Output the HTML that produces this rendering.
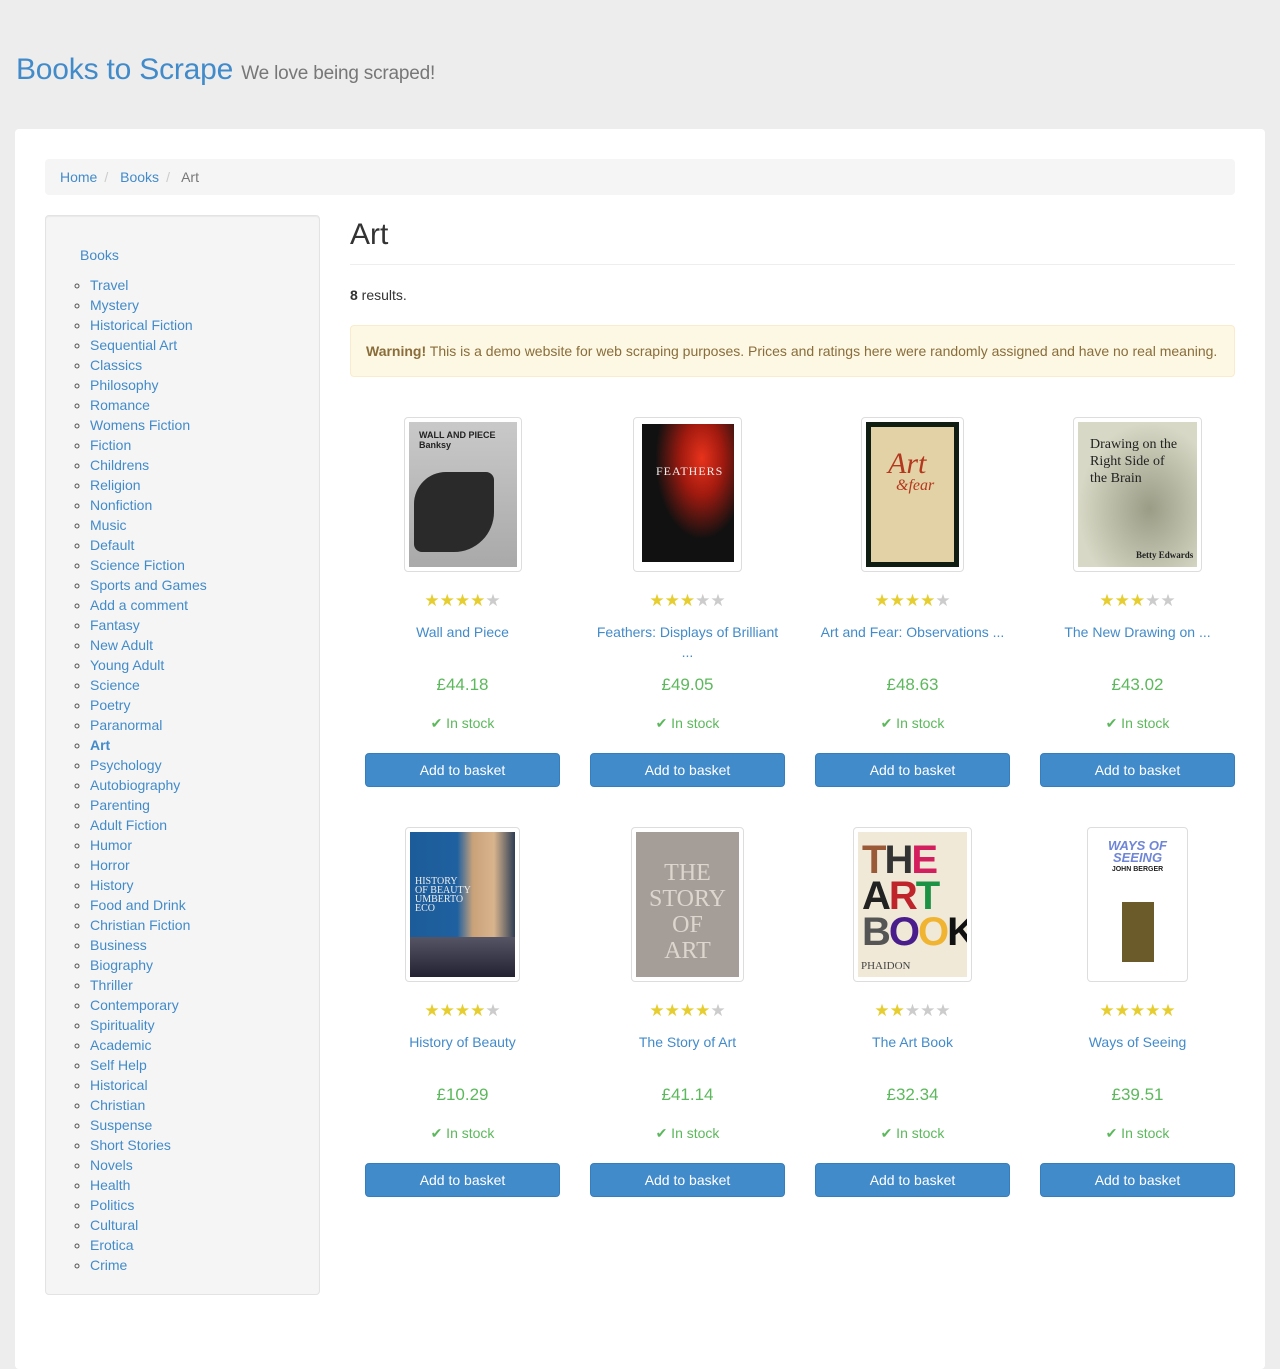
<!DOCTYPE html>
<html><head><meta charset="utf-8">
<style>
*{box-sizing:border-box;margin:0;padding:0}
body{width:1280px;height:1345px;background:#ededed;font-family:"Liberation Sans",Arial,sans-serif;font-size:14px;color:#333;position:relative;overflow:hidden}
a{color:#428bca;text-decoration:none}
.abs{position:absolute}
.wrap{position:absolute;left:15px;top:129px;width:1250px;height:1240px;background:#fff;border-radius:4px}
.bc{position:absolute;left:45px;top:159px;width:1190px;height:36px;background:#f5f5f5;border-radius:4px;line-height:36px;padding-left:15px}
.bc .s{color:#ccc;padding:0 8px 0 7px}
.side{position:absolute;left:45px;top:215px;width:275px;height:1080px;background:#f5f5f5;border:1px solid #e3e3e3;border-radius:4px;box-shadow:inset 0 1px 1px rgba(0,0,0,.05)}
.side ul{position:absolute;left:44px;top:59px;list-style:circle;color:#555}
.side li{height:20px;line-height:20px}
.card{position:absolute;width:225px;height:380px}
.th{position:absolute;top:0;height:155px;border:1px solid #ddd;border-radius:4px;padding:4px;background:#fff}
.th div{width:100%;height:100%;overflow:hidden;position:relative}
.st{position:absolute;top:173px;left:0;width:225px;text-align:center;font-size:17px;line-height:22px;color:#E6CE31}
.st i{font-style:normal;color:#ccc}
.tt{position:absolute;top:205px;left:15px;width:195px;text-align:center;line-height:20px;color:#428bca}
.pr{position:absolute;top:258px;left:0;width:225px;text-align:center;font-size:17px;line-height:20px;color:#5cb85c}
.sk{position:absolute;top:299px;left:0;width:225px;text-align:center;line-height:14px;color:#5cb85c}
.bt{position:absolute;top:336px;left:15px;width:195px;height:34px;background:#428bca;border:1px solid #357ebd;border-radius:4px;color:#fff;text-align:center;line-height:32px}
.cv{font-family:"Liberation Serif",serif}
</style></head><body>
<div class="abs" style="left:16px;top:50px;font-size:30px;color:#428bca;line-height:40px;letter-spacing:-0.2px">Books to Scrape <span style="font-size:19px;color:#777;letter-spacing:-0.2px">We love being scraped!</span></div>
<div class="wrap"></div>
<div class="bc"><a>Home</a><span class="s">/</span> <a>Books</a><span class="s">/</span> <span style="color:#777">Art</span></div>
<div class="side">
<a class="abs" style="left:34px;top:29px;line-height:20px">Books</a>
<ul>
<li><a>Travel</a></li><li><a>Mystery</a></li><li><a>Historical Fiction</a></li><li><a>Sequential Art</a></li><li><a>Classics</a></li><li><a>Philosophy</a></li><li><a>Romance</a></li><li><a>Womens Fiction</a></li><li><a>Fiction</a></li><li><a>Childrens</a></li><li><a>Religion</a></li><li><a>Nonfiction</a></li><li><a>Music</a></li><li><a>Default</a></li><li><a>Science Fiction</a></li><li><a>Sports and Games</a></li><li><a>Add a comment</a></li><li><a>Fantasy</a></li><li><a>New Adult</a></li><li><a>Young Adult</a></li><li><a>Science</a></li><li><a>Poetry</a></li><li><a>Paranormal</a></li><li><a style="font-weight:bold">Art</a></li><li><a>Psychology</a></li><li><a>Autobiography</a></li><li><a>Parenting</a></li><li><a>Adult Fiction</a></li><li><a>Humor</a></li><li><a>Horror</a></li><li><a>History</a></li><li><a>Food and Drink</a></li><li><a>Christian Fiction</a></li><li><a>Business</a></li><li><a>Biography</a></li><li><a>Thriller</a></li><li><a>Contemporary</a></li><li><a>Spirituality</a></li><li><a>Academic</a></li><li><a>Self Help</a></li><li><a>Historical</a></li><li><a>Christian</a></li><li><a>Suspense</a></li><li><a>Short Stories</a></li><li><a>Novels</a></li><li><a>Health</a></li><li><a>Politics</a></li><li><a>Cultural</a></li><li><a>Erotica</a></li><li><a>Crime</a></li>
</ul></div>
<div class="abs" style="left:350px;top:217px;font-size:30px;line-height:36px;color:#333">Art</div>
<div class="abs" style="left:350px;top:264px;width:885px;border-top:1px solid #eee"></div>
<div class="abs" style="left:350px;top:285px;line-height:20px"><b>8</b> results.</div>
<div class="abs" style="left:350px;top:325px;width:885px;height:52px;background:#fcf8e3;border:1px solid #faebcc;border-radius:4px;color:#8a6d3b;padding:15px;line-height:20px"><b>Warning!</b> This is a demo website for web scraping purposes. Prices and ratings here were randomly assigned and have no real meaning.</div>

<!-- row 1 -->
<div class="card" style="left:350px;top:417px">
<div class="th" style="left:54px;width:118px"><div style="background:linear-gradient(#c9c9c9,#a9a9a9)"><span class="abs" style="left:10px;top:8px;font-size:9px;font-weight:bold;color:#222;line-height:10px">WALL AND PIECE<br>Banksy</span><span class="abs" style="left:5px;top:50px;width:80px;height:80px;background:#2a2a2a;border-radius:40% 10% 50% 10%"></span></div></div>
<div class="st">★★★★<i>★</i></div><div class="tt">Wall and Piece</div><div class="pr">£44.18</div><div class="sk">✔ In stock</div><div class="bt">Add to basket</div></div>
<div class="card" style="left:575px;top:417px">
<div class="th" style="left:58px;width:109px"><div style="background:#fff"><span class="abs" style="left:4px;top:2px;width:92px;height:138px;background:radial-gradient(ellipse at 65% 25%,#e8331c 0,#a11a0f 25%,#111 55%)"></span><span class="abs cv" style="left:18px;top:42px;font-size:12px;color:#eee;letter-spacing:1px">FEATHERS</span></div></div>
<div class="st">★★★<i>★★</i></div><div class="tt">Feathers: Displays of Brilliant ...</div><div class="pr">£49.05</div><div class="sk">✔ In stock</div><div class="bt">Add to basket</div></div>
<div class="card" style="left:800px;top:417px">
<div class="th" style="left:61px;width:103px"><div style="background:#0f1d12"><span class="abs" style="left:5px;top:5px;width:83px;height:135px;background:#e2d2a6"></span><span class="abs cv" style="left:22px;top:25px;font-size:30px;color:#b4381e;font-style:italic">Art</span><span class="abs cv" style="left:30px;top:55px;font-size:16px;color:#b4381e;font-style:italic">&amp;fear</span></div></div>
<div class="st">★★★★<i>★</i></div><div class="tt">Art and Fear: Observations ...</div><div class="pr">£48.63</div><div class="sk">✔ In stock</div><div class="bt">Add to basket</div></div>
<div class="card" style="left:1025px;top:417px">
<div class="th" style="left:48px;width:129px"><div style="background:radial-gradient(ellipse at 60% 60%,#9a9c86,#d7d8c5 70%)"><span class="abs cv" style="left:12px;top:14px;font-size:14px;line-height:17px;color:#222">Drawing on the<br>Right Side of<br>the Brain</span><span class="abs cv" style="left:58px;top:128px;font-size:9px;font-weight:bold;color:#222">Betty Edwards</span></div></div>
<div class="st">★★★<i>★★</i></div><div class="tt">The New Drawing on ...</div><div class="pr">£43.02</div><div class="sk">✔ In stock</div><div class="bt">Add to basket</div></div>

<!-- row 2 -->
<div class="card" style="left:350px;top:827px">
<div class="th" style="left:55px;width:115px"><div style="background:linear-gradient(90deg,#1c5c9a 0,#1f60a0 45%,#caa27a 60%,#d8b48d 80%,#2d3d55 100%)"><span class="abs" style="left:0;top:105px;width:105px;height:40px;background:linear-gradient(#556,#223)"></span><span class="abs cv" style="left:5px;top:45px;font-size:10px;line-height:9px;color:#eee">HISTORY<br>OF BEAUTY<br>UMBERTO<br>ECO</span></div></div>
<div class="st">★★★★<i>★</i></div><div class="tt">History of Beauty</div><div class="pr">£10.29</div><div class="sk">✔ In stock</div><div class="bt">Add to basket</div></div>
<div class="card" style="left:575px;top:827px">
<div class="th" style="left:56px;width:113px"><div style="background:#a59e98"><span class="abs cv" style="left:0;width:103px;text-align:center;top:28px;font-size:24px;line-height:26px;color:#ddd6cf">THE<br>STORY<br>OF<br>ART</span></div></div>
<div class="st">★★★★<i>★</i></div><div class="tt">The Story of Art</div><div class="pr">£41.14</div><div class="sk">✔ In stock</div><div class="bt">Add to basket</div></div>
<div class="card" style="left:800px;top:827px">
<div class="th" style="left:53px;width:119px"><div style="background:#f0e9d8"><span class="abs" style="left:4px;top:10px;font-size:40px;font-weight:bold;line-height:36px;letter-spacing:-2px"><span style="color:#9a5a38">T</span><span style="color:#333">H</span><span style="color:#d31f5e">E</span><br><span style="color:#222">A</span><span style="color:#c0242b">R</span><span style="color:#1c9245">T</span><br><span style="color:#555">B</span><span style="color:#4a1d8c">O</span><span style="color:#f0b430">O</span><span style="color:#111">K</span></span><span class="abs cv" style="left:3px;top:128px;font-size:11px;color:#444">PHAIDON</span></div></div>
<div class="st">★★<i>★★★</i></div><div class="tt">The Art Book</div><div class="pr">£32.34</div><div class="sk">✔ In stock</div><div class="bt">Add to basket</div></div>
<div class="card" style="left:1025px;top:827px">
<div class="th" style="left:62px;width:101px"><div style="background:#fff"><span class="abs" style="left:0;width:91px;text-align:center;top:8px;font-size:13px;font-weight:bold;font-style:italic;line-height:12px;color:#6f86d6">WAYS OF<br>SEEING</span><span class="abs" style="left:0;width:91px;text-align:center;top:34px;font-size:7px;font-weight:bold;color:#222">JOHN BERGER</span><span class="abs" style="left:30px;top:70px;width:32px;height:60px;background:#6b5a2a"></span></div></div>
<div class="st">★★★★★</div><div class="tt">Ways of Seeing</div><div class="pr">£39.51</div><div class="sk">✔ In stock</div><div class="bt">Add to basket</div></div>
</body></html>
